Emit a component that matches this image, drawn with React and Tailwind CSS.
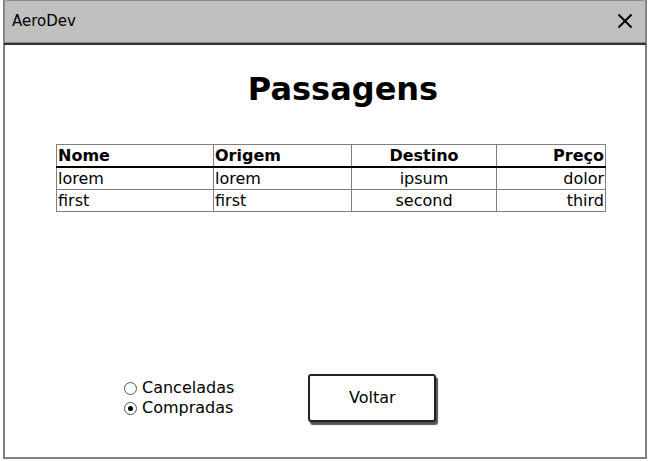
import React, { useState } from 'react';

const rows = [
  { nome: 'lorem', origem: 'lorem', destino: 'ipsum', preco: 'dolor' },
  { nome: 'first', origem: 'first', destino: 'second', preco: 'third' },
];

function App() {
  const [filtro, setFiltro] = useState('compradas');

  return (
    <div className="w-[648px] h-[461px] bg-white font-['DejaVu_Sans',sans-serif] text-black">
      <div className="ml-[3px] w-[644px] h-[459px] border-2 border-t-0 border-[#808080] flex flex-col">
        {/* title bar */}
        <div className="h-[43px] -mx-[1px] bg-[#c0c0c0] border border-[#8a8a8a] rounded-t-[3px] shadow-[0_2px_0_#333] flex items-center justify-between pl-[7px] pr-[12px]">
          <span className="text-[15px]">AeroDev</span>
          <svg width="16" height="16" viewBox="0 0 16 16" className="mt-[-2px]">
            <path d="M1.5 1.5 L14.5 14.5 M14.5 1.5 L1.5 14.5" stroke="#000" strokeWidth="2" />
          </svg>
        </div>

        <h1 className="mt-[27px] text-center text-[32px] font-bold leading-[38px] pl-[36px]">Passagens</h1>

        <table className="mt-[36px] ml-[51px] w-[550px] border-collapse text-[16px] leading-[21px]">
          <thead>
            <tr className="border-b-2 border-black">
              <th className="w-[157px] text-left font-bold border border-[#808080] border-b-2 border-b-black px-[1px]">Nome</th>
              <th className="w-[138px] text-left font-bold border border-[#808080] border-b-2 border-b-black px-[1px]">Origem</th>
              <th className="w-[145px] text-center font-bold border border-[#808080] border-b-2 border-b-black px-[1px]">Destino</th>
              <th className="text-right font-bold border border-[#808080] border-b-2 border-b-black px-[1px]">Preço</th>
            </tr>
          </thead>
          <tbody>
            {rows.map((r) => (
              <tr key={r.nome}>
                <td className="text-left border border-[#808080] px-[1px]">{r.nome}</td>
                <td className="text-left border border-[#808080] px-[1px]">{r.origem}</td>
                <td className="text-center border border-[#808080] px-[1px]">{r.destino}</td>
                <td className="text-right border border-[#808080] px-[1px]">{r.preco}</td>
              </tr>
            ))}
          </tbody>
        </table>

        <div className="mt-auto mb-[35px] flex items-center">
          <div className="ml-[119px] flex flex-col text-[16px] leading-[20px]">
            <label className="flex items-center gap-[5px]" onClick={() => setFiltro('canceladas')}>
              <span className="w-[13px] h-[13px] rounded-full border border-[#555] bg-white flex items-center justify-center">
                {filtro === 'canceladas' && <span className="w-[5px] h-[5px] rounded-full bg-black" />}
              </span>
              Canceladas
            </label>
            <label className="flex items-center gap-[5px]" onClick={() => setFiltro('compradas')}>
              <span className="w-[13px] h-[13px] rounded-full border border-[#555] bg-white flex items-center justify-center">
                {filtro === 'compradas' && <span className="w-[5px] h-[5px] rounded-full bg-black" />}
              </span>
              Compradas
            </label>
          </div>
          <button className="ml-[74px] w-[128px] h-[48px] border-2 border-[#222] rounded-[3px] bg-white text-[16px] shadow-[2px_3px_1px_#555]">
            Voltar
          </button>
        </div>
      </div>
    </div>
  );
}

export default App;
